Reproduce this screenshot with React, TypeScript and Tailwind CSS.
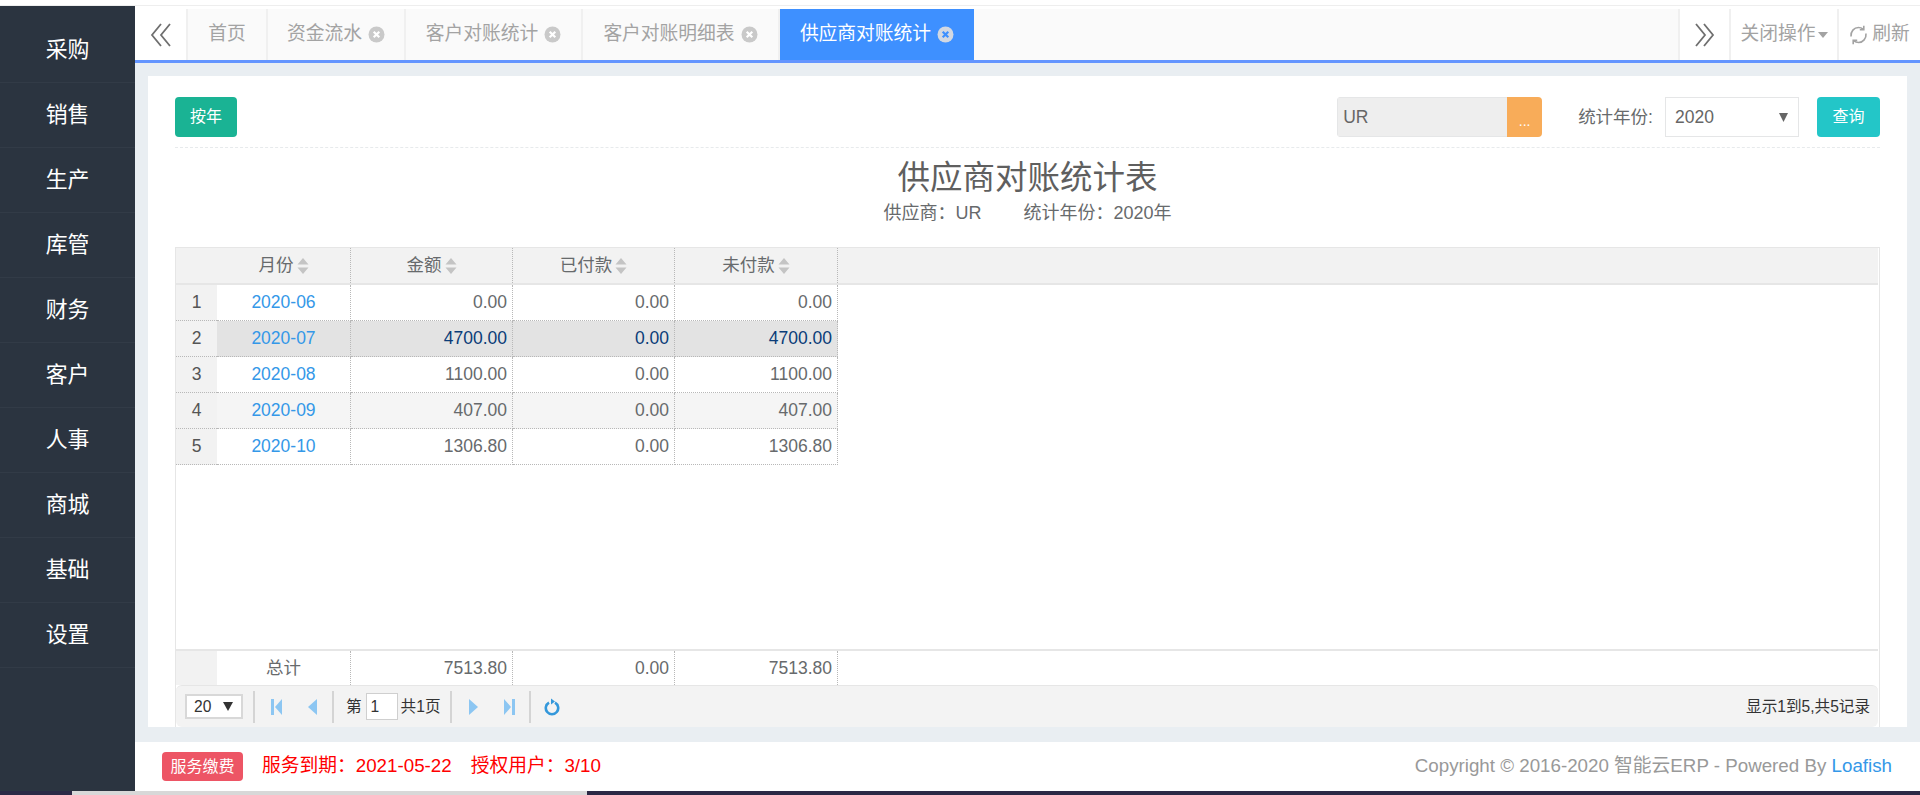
import { ChevronDown } from "lucide-react";

const menus = ["采购", "销售", "生产", "库管", "财务", "客户", "人事", "商城", "基础", "设置"];

const rows = [
  { month: "2020-06", amount: "0.00", paid: "0.00", unpaid: "0.00" },
  { month: "2020-07", amount: "4700.00", paid: "0.00", unpaid: "4700.00" },
  { month: "2020-08", amount: "1100.00", paid: "0.00", unpaid: "1100.00" },
  { month: "2020-09", amount: "407.00", paid: "0.00", unpaid: "407.00" },
  { month: "2020-10", amount: "1306.80", paid: "0.00", unpaid: "1306.80" },
];

function CloseDot({ active = false }: { active?: boolean }) {
  return (
    <svg width="17" height="17" viewBox="0 0 17 17" className="ml-[6px] shrink-0">
      <circle cx="8.5" cy="8.5" r="8" fill={active ? "#d2d8e2" : "#c9c9c9"} />
      <path d="M5.7 5.7l5.6 5.6M11.3 5.7l-5.6 5.6" stroke={active ? "#3e90ff" : "#fff"} strokeWidth="2.2" />
    </svg>
  );
}

function Chevrons({ right = false }: { right?: boolean }) {
  return (
    <svg width="22" height="24" viewBox="0 0 22 24" fill="none" stroke="#6f6f6f" strokeWidth="1.8">
      {right ? <path d="M2 1l9 11-9 11M10 1l9 11-9 11" /> : <path d="M11 1L2 12l9 11M20 1l-9 11 9 11" />}
    </svg>
  );
}

function SortIcon() {
  return (
    <svg width="12" height="16" viewBox="0 0 12 16" className="ml-[3px] shrink-0" fill="#c4c4c4">
      <path d="M6 0l5.5 6.5H.5zM6 16L.5 9.5h11z" />
    </svg>
  );
}

function Tab({ label, close = true }: { label: string; close?: boolean }) {
  return (
    <div className="flex h-full items-center justify-center border-r-2 border-[#f0f0f0] text-[18.75px] text-[#a3a3a3]">
      <span className="whitespace-nowrap">{label}</span>
      {close && <CloseDot />}
    </div>
  );
}

function PagerSep() {
  return <div className="h-[32px] w-[2px] bg-[#d4d4d4]" />;
}

function PagerIcon({ d, w }: { d: string; w: number }) {
  return (
    <svg width={w} height="16" viewBox={`0 0 ${w} 16`} fill="#8cc6f2">
      <path d={d} />
    </svg>
  );
}

export default function App() {
  const cols = "grid grid-cols-[41px_134px_162px_162px_163px_1fr]";

  return (
    <div className="flex h-[795px] w-full flex-col overflow-hidden bg-white font-['Liberation_Sans','Noto_Sans_CJK_SC',sans-serif] text-[17.5px] text-[#676a6c]">
      <div className="h-[6px] shrink-0 border-b border-[#eeeeee] bg-white" />

      <div className="flex min-h-0 flex-1">
        <aside className="flex w-[135px] shrink-0 flex-col bg-[#2b3440] pt-[12px]">
          {menus.map((m) => (
            <div key={m} className="flex h-[65px] shrink-0 items-center justify-center border-b border-[#323b47] text-[21.875px] text-white">
              {m}
            </div>
          ))}
        </aside>

        <div className="flex min-w-0 flex-1 flex-col bg-[#e9eef2]">
          <div className="h-[3px] shrink-0 bg-white" />
          <div className="flex h-[54px] shrink-0 border-b-[3px] border-[#6495ff] bg-[#fafafa]">
            <div className="flex h-full w-[53px] items-center justify-center border-r-2 border-[#f0f0f0] bg-white">
              <Chevrons />
            </div>
            <div className="w-[80px]"><Tab label="首页" close={false} /></div>
            <div className="w-[138px]"><Tab label="资金流水" /></div>
            <div className="w-[177px]"><Tab label="客户对账统计" /></div>
            <div className="w-[197px]"><Tab label="客户对账明细表" /></div>
            <div className="flex h-full w-[194px] items-center justify-center bg-[#3e90ff] text-[18.75px] text-white">
              <span className="whitespace-nowrap">供应商对账统计</span>
              <CloseDot active />
            </div>
            <div className="flex-1" />
            <div className="flex h-full w-[53px] items-center justify-center border-x-2 border-[#f0f0f0] bg-white">
              <Chevrons right />
            </div>
            <div className="flex h-full w-[108px] items-center justify-center border-r-2 border-[#f0f0f0] bg-white text-[18.75px] text-[#a3a3a3]">
              <span className="whitespace-nowrap">关闭操作</span>
              <svg width="10" height="6" viewBox="0 0 10 6" fill="#a3a3a3" className="ml-[2px]"><path d="M0 0h10L5 6z" /></svg>
            </div>
            <div className="flex h-full w-[81px] items-center justify-center bg-white text-[18.75px] text-[#a3a3a3]">
              <svg width="19" height="20" viewBox="0 0 19 20" fill="none" stroke="#a3a3a3" strokeWidth="1.6" className="mr-[4px]">
                <path d="M2 11.5C1.5 6.5 5 2.5 9.5 2.5c1.8 0 3.4.6 4.6 1.6M17 8.5c.5 5-3 9-7.5 9-1.8 0-3.4-.6-4.6-1.6" />
                <path d="M14.8 0.8v4h-4M4.2 19.2v-4h4" />
              </svg>
              <span className="whitespace-nowrap">刷新</span>
            </div>
          </div>

          <div className="mx-0 mt-[13px] flex min-h-0 flex-1 flex-col pb-[15px] pl-[13px] pr-[13px]">
            <div className="flex min-h-0 flex-1 flex-col bg-white px-[27px] pt-[21px]">
              <div className="flex h-[51px] shrink-0 items-start justify-between border-b border-dashed border-[#e7eaec]">
                <button className="h-[40px] w-[62px] rounded-[4px] bg-[#1ab394] text-[16px] text-white">按年</button>
                <div className="flex items-center">
                  <div className="flex h-[40px] w-[205px] overflow-hidden rounded-[4px]">
                    <div className="flex flex-1 items-center border border-r-0 border-[#e5e6e7] bg-[#eeeeee] pl-[5px] text-[#666]">UR</div>
                    <div className="flex w-[35px] items-end justify-center bg-[#f8ac59] pb-[9px] text-[14px] leading-none text-white">...</div>
                  </div>
                  <span className="ml-[36px] whitespace-nowrap">统计年份:</span>
                  <div className="ml-[12px] flex h-[40px] w-[134px] items-center justify-between border border-[#e5e6e7] pl-[9px] pr-[10px] text-[#666]">
                    <span>2020</span>
                    <svg width="9" height="9" viewBox="0 0 9 9" fill="#666"><path d="M0 0h9L4.5 9z" /></svg>
                  </div>
                  <button className="ml-[18px] h-[40px] w-[63px] rounded-[4px] bg-[#23c6c8] text-[16px] text-white">查询</button>
                </div>
              </div>

              <h1 className="mt-[8px] h-[44px] shrink-0 text-center text-[32.5px] leading-[44px] text-[#5f5f5f]">供应商对账统计表</h1>
              <p className="h-[26px] shrink-0 text-center text-[18px] leading-[26px] text-[#676a6c]">
                供应商：UR<span className="ml-[42px]">统计年份：2020年</span>
              </p>

              <div className="mt-[21px] flex min-h-0 flex-1 flex-col border-x border-t border-[#e6e6e6] pr-[1px]">
                <div className={`${cols} h-[37px] shrink-0 border-b-2 border-[#e6e6e6] bg-[#f2f2f2]`}>
                  <div />
                  {["月份", "金额", "已付款", "未付款"].map((h) => (
                    <div key={h} className="flex items-center justify-center border-r border-dotted border-[#b8b8b8]">
                      {h}
                      <SortIcon />
                    </div>
                  ))}
                  <div />
                </div>

                {rows.map((r, i) => {
                  const selected = i === 1;
                  const stripe = i === 3;
                  const bg = selected ? "bg-[#e3e3e3]" : stripe ? "bg-[#f5f5f5]" : "bg-white";
                  const numColor = selected ? "text-[#0a3c78]" : "";
                  return (
                    <div key={r.month} className={`${cols} h-[36px] shrink-0`}>
                      <div className="flex items-center justify-center border-b border-dotted border-[#b8b8b8] bg-[#f2f2f2] text-[#555]">{i + 1}</div>
                      <div className={`flex items-center justify-center border-r border-b border-dotted border-[#b8b8b8] text-[#3498e8] ${bg}`}>{r.month}</div>
                      <div className={`flex items-center justify-end border-r border-b border-dotted border-[#b8b8b8] pr-[5px] ${bg} ${numColor}`}>{r.amount}</div>
                      <div className={`flex items-center justify-end border-r border-b border-dotted border-[#b8b8b8] pr-[5px] ${bg} ${numColor}`}>{r.paid}</div>
                      <div className={`flex items-center justify-end border-r border-b border-dotted border-[#b8b8b8] pr-[5px] ${bg} ${numColor}`}>{r.unpaid}</div>
                      <div />
                    </div>
                  );
                })}

                <div className="flex-1" />

                <div className={`${cols} h-[36px] shrink-0 border-t-2 border-[#e6e6e6]`}>
                  <div className="bg-[#f2f2f2]" />
                  <div className="flex items-center justify-center border-r border-dotted border-[#b8b8b8]">总计</div>
                  <div className="flex items-center justify-end border-r border-dotted border-[#b8b8b8] pr-[5px]">7513.80</div>
                  <div className="flex items-center justify-end border-r border-dotted border-[#b8b8b8] pr-[5px]">0.00</div>
                  <div className="flex items-center justify-end border-r border-dotted border-[#b8b8b8] pr-[5px]">7513.80</div>
                  <div />
                </div>

                <div className="flex h-[42px] shrink-0 items-center rounded-[6px] border-t border-[#e6e6e6] bg-[#f3f3f3] pl-[9px] pr-[8px] text-[15.6px] text-[#333]">
                  <div className="flex h-[25px] w-[58px] items-center justify-between border-2 border-[#d8d8d8] bg-white pl-[7px] pr-[8px]">
                    <span>20</span>
                    <svg width="10" height="9" viewBox="0 0 10 9" fill="#333"><path d="M0 0h10L5 9z" /></svg>
                  </div>
                  <div className="ml-[10px]"><PagerSep /></div>
                  <div className="ml-[16px]"><PagerIcon w={11} d="M0 0h3v16H0zM11 0v16L4 8z" /></div>
                  <div className="ml-[26px]"><PagerIcon w={9} d="M9 0v16L0 8z" /></div>
                  <div className="ml-[15px]"><PagerSep /></div>
                  <span className="ml-[12px]">第</span>
                  <div className="ml-[4px] flex h-[27px] w-[32px] items-center border border-[#cfcfcf] bg-white pl-[4px]">1</div>
                  <span className="ml-[3px] whitespace-nowrap">共1页</span>
                  <div className="ml-[10px]"><PagerSep /></div>
                  <div className="ml-[17px]"><PagerIcon w={9} d="M0 0v16l9-8z" /></div>
                  <div className="ml-[26px]"><PagerIcon w={11} d="M0 0v16l7-8zM8 0h3v16H8z" /></div>
                  <div className="ml-[14px]"><PagerSep /></div>
                  <svg width="16" height="18" viewBox="0 0 16 18" fill="none" stroke="#3498db" strokeWidth="2.6" className="ml-[13px]">
                    <path d="M5 4.6a6.2 6.2 0 1 0 6 0" />
                    <path d="M7 0.5v6l4-3z" fill="#3498db" stroke="none" />
                  </svg>
                  <span className="ml-auto whitespace-nowrap">显示1到5,共5记录</span>
                </div>
              </div>
            </div>
          </div>

          <div className="flex h-[49px] shrink-0 items-center justify-between bg-white pl-[27px] pr-[28px]">
            <div className="flex items-center">
              <span className="flex h-[29px] w-[81px] items-center justify-center rounded-[4px] bg-[#ed5565] text-[16px] text-white">服务缴费</span>
              <span className="ml-[19px] whitespace-nowrap text-[18.75px] text-[#ff0000]">服务到期：2021-05-22</span>
              <span className="ml-[19px] whitespace-nowrap text-[18.75px] text-[#ff0000]">授权用户：3/10</span>
            </div>
            <div className="whitespace-nowrap text-[18.75px] text-[#999999]">
              Copyright © 2016-2020 智能云ERP - Powered By <span className="text-[#3498e8]">Loafish</span>
            </div>
          </div>
        </div>
      </div>

      <div className="flex h-[4px] shrink-0 bg-[#2b2845]">
        <div className="ml-[72px] h-full w-[515px] bg-[#d8d8d8]" />
      </div>
    </div>
  );
}
